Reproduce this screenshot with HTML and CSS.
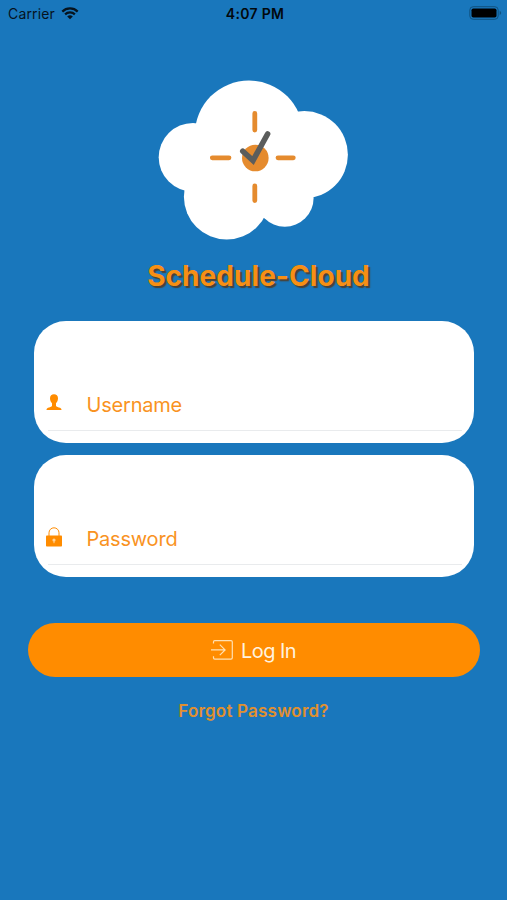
FILE: index.html
```html
<!DOCTYPE html>
<html lang="en">
<head>
<meta charset="utf-8">
<title>Schedule-Cloud</title>
<link rel="stylesheet" href="styles.css">
</head>
<body>
<header class="status">
  <div class="carrier"><span>Carrier</span>
    <svg class="wifi" viewBox="0 0 18 13" width="18" height="13"><path d="M1.3 4.6a11 11 0 0 1 15.4 0M4.1 7.4a7 7 0 0 1 9.8 0" fill="none" stroke="#06131e" stroke-width="2.2"/><path d="M6.2 9.5a4 4 0 0 1 5.6 0L9 12.3z" fill="#06131e"/></svg>
  </div>
  <span class="time">4:07 PM</span>
  <svg class="battery" viewBox="0 0 33 14" width="33" height="14"><rect x=".8" y=".7" width="28.4" height="12.6" rx="3.4" fill="none" stroke="#10527f"/><rect x="2.5" y="2.4" width="25" height="9.2" rx="1.8" fill="#000"/><path d="M30.7 4.8q3 2.2 0 4.4z" fill="#10527f"/></svg>
</header>
<main class="login">
  <svg class="logo" viewBox="158 80 190 160" width="190" height="160">
    <g fill="#fff"><circle cx="249" cy="134.7" r="54.2"/><circle cx="193" cy="157.3" r="34.3"/><circle cx="304.3" cy="154.7" r="43.6"/><circle cx="226.7" cy="196.8" r="42.8"/><circle cx="284.8" cy="198" r="28.8"/><path d="M195 140H305V198L264 218 215 200z"/></g>
    <path d="M254.8 113.5V130M254.8 186V200.5M212.3 157.8H229M278 157.8H293.3" stroke="#e58b2e" stroke-width="4.8" stroke-linecap="round"/>
    <circle cx="255.3" cy="158" r="13.3" fill="#e58b2e"/>
    <path d="M242.8 151.2L253 160.5 267.6 134" fill="none" stroke="#5b5d5c" stroke-width="5.6" stroke-linecap="round" stroke-linejoin="miter"/>
  </svg>
  <h1 class="title">Schedule-Cloud</h1>
  <form class="fields">
    <label class="field">
      <svg class="icon" viewBox="0 0 16 20" width="16" height="20"><path d="M8 1.2C5.6 1.2 4 2.8 4 5.2c0 2.2.9 3.9 2 5v2.7c-.3 1-2.6 1.2-4 1.8C.9 15.2.5 15.8.5 17h15c0-1.2-.4-1.8-1.5-2.3-1.4-.6-3.7-.8-4-1.8v-2.7c1.1-1.1 2-2.8 2-5 0-2.4-1.6-4-4-4z" fill="#ff8c00"/></svg>
      <span>Username</span>
    </label>
    <label class="field">
      <svg class="icon" viewBox="0 0 16 20" width="16" height="20"><path d="M3 9V5.8a5 5 0 0 1 10 0V9" fill="none" stroke="#ff8c00" stroke-width="1"/><rect y="8.4" width="16" height="11.1" rx=".8" fill="#ff8c00"/><circle cx="8" cy="13" r="1.6" fill="#ffd39a"/><path d="M8 13v3.2" stroke="#ffd39a" stroke-width="1"/></svg>
      <span>Password</span>
    </label>
  </form>
  <button class="submit" type="button">
    <svg viewBox="0 0 22 20" width="22" height="20" fill="none" stroke="#ffe0b3" stroke-width="1.2"><path d="M2.5 3.5V2q0-1.3 1.3-1.3H20q1.3 0 1.3 1.3v15.8q0 1.3-1.3 1.3H3.8q-1.3 0-1.3-1.3v-1.5M0 9.9h14M8.8 4.6l5.3 5.3-5.3 5.3"/></svg>
    <span class="login-text">Log In</span>
  </button>
  <a class="forgot">Forgot Password?</a>
</main>
</body>
</html>
```
FILE: styles.css
```css
* { box-sizing: border-box; }
body {
  margin: 0;
  height: 900px;
  overflow: hidden;
  background: #1977bc;
  font-family: Inter, "Liberation Sans", sans-serif;
}
.status {
  height: 28px;
  padding: 0 5px 2px 8px;
  display: grid;
  grid-template-columns: 1fr auto 1fr;
  align-items: center;
  color: #06131e;
  font-size: 14px;
}
.carrier { display: flex; align-items: center; gap: 6px; letter-spacing: .15px; }
.time { font-weight: 600; color: #02080d; font-size: 14px; letter-spacing: .3px; }
.battery { justify-self: end; }
.login {
  display: flex;
  flex-direction: column;
  align-items: center;
  padding-top: 52px;
}
.logo { display: block; margin-right: 1px; }
.title {
  margin: 18px 0 0 10px;
  font-size: 28px;
  line-height: 36px;
  font-weight: 700;
  letter-spacing: .05px;
  color: #f78f14;
  text-shadow: 2px 2px 1px #4a4238;
  white-space: nowrap;
}
.fields {
  width: 440px;
  margin-top: 27px;
  display: flex;
  flex-direction: column;
  gap: 12px;
}
.field {
  height: 122.2px;
  padding: 0 12px 12px;
  border-radius: 32px;
  background: linear-gradient(#e9ebed, #e9ebed) 14px 109px / 414px 1px no-repeat #fff;
  display: flex;
  align-items: flex-end;
  color: #f9931f;
  font-size: 20px;
  letter-spacing: -.2px;
}
.field span {
  flex: 1;
  padding-left: 25px;
  line-height: 24px;
  padding-bottom: 14.6px;
}
.icon { margin-bottom: 18px; }
.submit {
  width: 452px;
  height: 54.5px;
  margin-top: 45.4px;
  padding: 0;
  border: 0;
  border-radius: 28px;
  background: #ff8c00;
  color: #fff2df;
  font: 20px Inter, "Liberation Sans", sans-serif;
  display: flex;
  align-items: center;
  justify-content: center;
  gap: 8px;
}
.login-text { letter-spacing: -.6px; padding-top: 1px; }
.forgot {
  margin-top: 24px;
  font-size: 17px;
  line-height: 20px;
  font-weight: 600;
  letter-spacing: .2px;
  color: #e0902f;
}
```
